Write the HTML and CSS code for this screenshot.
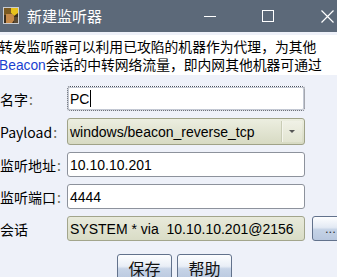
FILE: index.html
```html
<!DOCTYPE html>
<html lang="zh-CN">
<head>
    <meta charset="UTF-8">
    <title>新建监听器</title>
    <link rel="stylesheet" href="styles.css">
</head>
<body>
    <div class="titlebar">
        <div class="app-icon">
            <svg width="16" height="17" viewBox="0 0 16 17">
                <rect x="0.5" y="0.5" width="15" height="16" fill="#3a2e1c" stroke="#c9ccd2"/>
                <rect x="1" y="1" width="7" height="7" fill="#7a5a22"/>
                <path d="M8 1 L15 1 L15 6 L11 9 L8 6 Z" fill="#e8c21c"/>
                <path d="M3 7 L10 7 L12 12 L9 16 L3 16 Z" fill="#c58a4a"/>
                <rect x="11" y="10" width="4" height="6" fill="#5b4a33"/>
            </svg>
        </div>
        <span class="title">新建监听器</span>
        <div class="win-btns">
            <span class="win-min"></span>
            <span class="win-max"></span>
            <svg class="win-close" width="13" height="13" viewBox="0 0 13 13">
                <path d="M0.5 0.5 L12.5 12.5 M12.5 0.5 L0.5 12.5" stroke="#fff" stroke-width="1.2"/>
            </svg>
        </div>
    </div>

    <div class="desc">
        转发监听器可以利用已攻陷的机器作为代理，为其他<br>
        <span class="blue">Beacon</span>会话的中转网络流量，即内网其他机器可通过
    </div>

    <div class="form">
        <label>名字<span class="colon">:</span></label>
        <div class="field text focus">PC<span class="caret"></span></div>
        <span></span>

        <label>Payload<span class="colon">:</span></label>
        <div class="field combo">
            <span class="combo-text">windows/beacon_reverse_tcp</span>
            <span class="combo-arrow"></span>
        </div>
        <span></span>

        <label>监听地址<span class="colon">:</span></label>
        <div class="field text">10.10.10.201</div>
        <span></span>

        <label>监听端口<span class="colon">:</span></label>
        <div class="field text">4444</div>
        <span></span>

        <label>会话</label>
        <div class="field session">SYSTEM * via&nbsp; 10.10.10.201@2156</div>
        <button class="dots">...</button>
    </div>

    <div class="actions">
        <button class="btn">保存</button>
        <button class="btn">帮助</button>
    </div>
</body>
</html>
```

FILE: styles.css
```css
body {
    margin: 0;
    width: 337px;
    height: 277px;
    overflow: hidden;
    background: #eef1f9;
    font-family: "Liberation Sans", "Noto Sans CJK SC", sans-serif;
    font-size: 14px;
    color: #000;
}
.titlebar {
    height: 32px;
    background: #5c6979;
    display: flex;
    align-items: center;
    color: #fff;
}
.app-icon {
    width: 16px;
    height: 17px;
    margin: 0 8px 2px 3px;
    display: flex;
}
.title {
    font-family: "Noto Sans CJK SC", sans-serif;
    font-size: 15px;
    margin-bottom: 2px;
}
.win-btns {
    margin-left: auto;
    display: flex;
    align-items: center;
}
.win-min {
    width: 12px;
    height: 1px;
    background: #fff;
    margin-right: 46px;
}
.win-max {
    width: 10px;
    height: 10px;
    border: 1px solid #fff;
    margin-right: 47px;
}
.win-close {
    margin-right: 3px;
}
.desc {
    margin-top: 3px;
    height: 40px;
    background: #fff;
    margin-left: -1px;
    font-family: "Noto Sans CJK SC", sans-serif;
    font-size: 13.8px;
    line-height: 18px;
    white-space: nowrap;
    padding-top: 2px;
    box-sizing: border-box;
}
.blue {
    color: #1a3fd0;
    font-family: "Liberation Sans", sans-serif;
}
.form {
    margin-top: 11px;
    display: grid;
    grid-template-columns: 67px 238px auto;
    grid-template-rows: 25px 27px 25px 25px 25px;
    row-gap: 7px;
    align-items: center;
}
.form > :nth-child(13) { margin-top: 1px; }
label {
    font-family: "Noto Sans CJK SC", "Liberation Sans", sans-serif;
    font-size: 14px;
    white-space: nowrap;
}
.colon {
    color: #6b6a52;
    margin-left: 1px;
}
.field {
    height: 100%;
    box-sizing: border-box;
    display: flex;
    align-items: center;
    padding-left: 2px;
    border-radius: 3px;
    white-space: nowrap;
}
.text {
    background: #fff;
    border: 1px solid #8d929c;
}
.focus {
    border: 1px dotted #4a5160;
    box-shadow: inset 0 0 0 1px #c3c8d3;
}
.caret {
    width: 1px;
    height: 17px;
    background: #000;
    margin-left: 1px;
}
.combo {
    background: linear-gradient(#eceee0, #d7dac3);
    border: 1px solid #9fa288;
    padding-right: 2px;
}
.combo-text {
    flex: 1;
}
.combo-arrow {
    width: 20px;
    height: 21px;
    border-left: 1px solid #c9ccb5;
    box-shadow: inset 1px 0 0 #f4f5ec;
    background: linear-gradient(#f0f1e6, #e2e4d1);
    position: relative;
}
.combo-arrow::after {
    content: "";
    position: absolute;
    left: 7px;
    top: 9px;
    border-left: 3px solid transparent;
    border-right: 3px solid transparent;
    border-top: 3px solid #555;
}
.session {
    background: linear-gradient(#e8eadb, #d9dcc6);
    border: 1px solid #a2a58c;
}
.dots {
    margin-left: 7px;
    width: 40px;
    height: 25px;
    border: 1px solid #62728c;
    border-radius: 3px;
    background: linear-gradient(#fdfeff, #e3eaf4 45%, #c5d3e6 55%, #b9c8df);
    font-family: "Liberation Sans", sans-serif;
    font-size: 13px;
    text-align: left;
    padding: 0 0 0 12px;
    color: #333;
}
.actions {
    margin-top: 13px;
    padding-left: 117px;
    display: flex;
    gap: 5px;
}
.btn {
    width: 55px;
    height: 27px;
    border: 1px solid #62728c;
    border-radius: 3px;
    background: linear-gradient(#fdfeff, #e9eef6 45%, #c7d4e7 55%, #b9c8df);
    font-family: "Noto Sans CJK SC", sans-serif;
    font-size: 16px;
    padding: 0;
    color: #111;
    line-height: 24px;
}
```
